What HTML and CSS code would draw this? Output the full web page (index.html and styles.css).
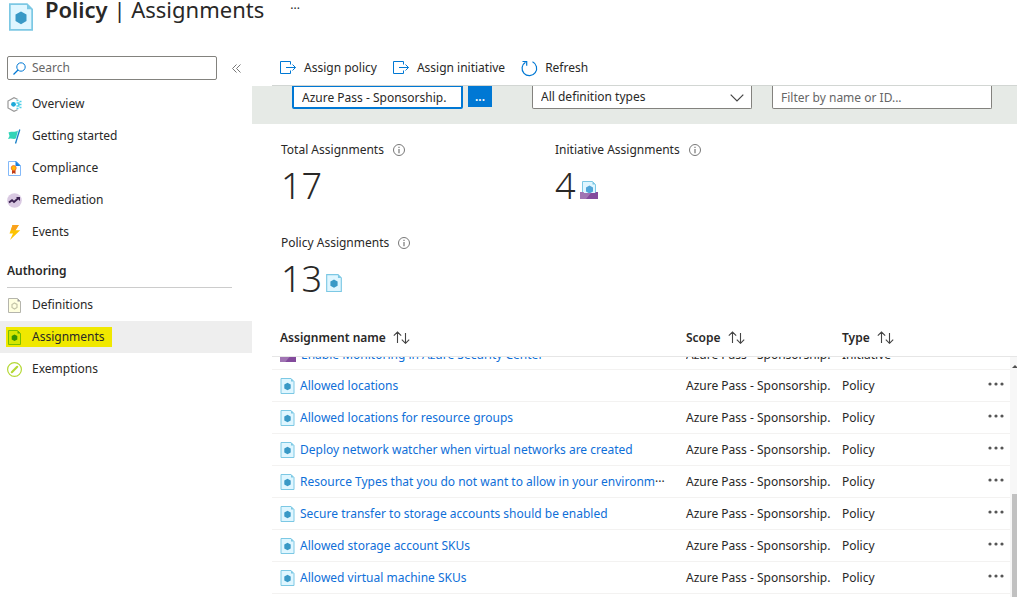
FILE: index.html
```
<!DOCTYPE html>
<html lang="en">
<head>
<meta charset="utf-8">
<title>Policy | Assignments</title>
<link rel="stylesheet" href="styles.css">
</head>
<body>
<svg class="defs" aria-hidden="true">
  <symbol id="policy" viewBox="0 0 14 16">
    <path d="M.5.5h10l3 3v12H.5z" fill="#dff6ff" stroke="#7cc8e4"/>
    <path d="M10.500.5v3h3z" fill="#7cc8e4"/>
    <path d="M7 4.800l3.200 1.800v3.800L7 12.200l-3.200-1.800V6.600z" fill="#3999c6"/>
  </symbol>
  <symbol id="initiative" viewBox="0 0 18 18">
    <path d="M2.500 13V.500h10l3 3V13z" fill="#dff6ff" stroke="#7cc8e4"/>
    <path d="M12.500.500v3h3z" fill="#7cc8e4"/>
    <path d="M9.500 4.500l3.500 2v4l-3.500 2-3.500-2v-4z" fill="#50a5d8"/>
    <path d="M0 11h3l1 1h11l1-1h2v7H0z" fill="#834a9c"/>
    <path d="M0 11h3l1 1h7l-5 6H0z" fill="#a074b3"/>
  </symbol>
  <symbol id="assign" viewBox="0 0 17 14">
    <path d="M10.500 3.500v-3h-10v12h10v-3" fill="none" stroke="#0078d4"/>
    <path d="M6 6.500h9.500M12.500 3.500l3 3-3 3" fill="none" stroke="#0078d4"/>
  </symbol>
  <symbol id="info" viewBox="0 0 12 12">
    <circle cx="6" cy="6" r="5.500" fill="none" stroke="#777"/>
    <path d="M6 2.800v1.300M6 5v4.200" stroke="#777" stroke-width="1.200"/>
  </symbol>
  <symbol id="sort" viewBox="0 0 17 13">
    <path d="M4.500 12V1.200M.800 4.700l3.700-3.700 3.700 3.700M12.500 2v10M8.800 8.600l3.700 3.700 3.700-3.700" fill="none" stroke="#444" stroke-width="1.100"/>
  </symbol>
  <symbol id="dots" viewBox="0 0 16 4">
    <circle cx="2" cy="2" r="1.600"/><circle cx="8" cy="2" r="1.600"/><circle cx="14" cy="2" r="1.600"/>
  </symbol>
</svg>

<header class="title-bar">
  <svg class="title-icon"><use href="#policy"/></svg>
  <h1><strong>Policy</strong> | Assignments</h1>
  <button class="title-more" aria-label="More">···</button>
</header>

<div class="layout">
  <aside class="sidebar">
    <div class="search-row">
      <label class="search">
        <svg viewBox="0 0 13 13"><circle cx="8" cy="5" r="4.200" fill="none" stroke="#0078d4"/><path d="M5 8L.500 12.500" stroke="#0078d4" stroke-width="1.200"/></svg>
        <input type="text" placeholder="Search" aria-label="Search">
      </label>
      <button class="collapse" aria-label="Collapse menu"><svg viewBox="0 0 9 9"><path d="M4.500.500l-4 4 4 4M8.500.500l-4 4 4 4" fill="none" stroke="#777"/></svg></button>
    </div>
    <nav>
      <a class="item" href="#"><span class="mark">
        <svg viewBox="0 0 15 15"><path d="M10.500 2.300L7 .700 1 4v7l6 3.300 3.500-1.600" fill="none" stroke="#999" stroke-width="1.200"/><circle cx="6.500" cy="7.300" r="2.400" fill="#1ba8d8"/><path d="M9.500 3.500h2M12.500 4.500h2M9.500 6h3M11 7.500h3.500M9.500 9h3M12.500 10.500h2M9.500 11.500h2" stroke="#50d0e8" stroke-width="1.500"/></svg>
        Overview</span></a>
      <a class="item" href="#"><span class="mark">
        <svg viewBox="0 0 15 15"><path d="M1.500 3.500c3-2 5 .800 9.500-2L9 9.300c-2.500 1.700-4.500-1-8 .700l1.500-3z" fill="#32d4b8"/><path d="M12.800.500L8.500 14.500" stroke="#1880c8" stroke-width="1.300"/></svg>
        Getting started</span></a>
      <a class="item" href="#"><span class="mark">
        <svg viewBox="0 0 15 15"><path d="M1.500.500h8l4 4v10h-12z" fill="#fff" stroke="#83b9f9"/><path d="M8.500 0v5h5z" fill="#1480e0"/><path d="M5 8v5l1.700-1L8.500 13V8z" fill="#c03c18"/><circle cx="6.700" cy="7" r="2.500" fill="#ffb900" stroke="#f06830" stroke-width=".800"/></svg>
        Compliance</span></a>
      <a class="item" href="#"><span class="mark">
        <svg viewBox="0 0 15 15"><circle cx="7.500" cy="7.500" r="7.300" fill="#d9c9e2"/><path d="M2 9.500l3-2.300 2 1.800 4.500-4" fill="none" stroke="#3a2150" stroke-width="1.800"/><path d="M9 4h4v4z" fill="#3a2150"/></svg>
        Remediation</span></a>
      <a class="item" href="#"><span class="mark">
        <svg viewBox="0 0 15 15"><path d="M5.500 0h6.300L8.500 5.200h4.700L3 15l3-6.500H2.500z" fill="#fdc400"/><path d="M5.500 0h6.300L8.500 5.200H4z" fill="#faa21d"/></svg>
        Events</span></a>
      <h2>Authoring</h2>
      <a class="item" href="#"><span class="mark">
        <svg viewBox="0 0 15 15"><path d="M1.500.500h9l3 3v11h-12z" fill="#ffffe0" stroke="#b5b5ad"/><path d="M10.500.500v3h3z" fill="#999"/><path d="M7.500 5l2.500 1.400v3L7.500 11 5 9.500v-3z" fill="none" stroke="#c5c5a8" stroke-width="1.200"/></svg>
        Definitions</span></a>
      <a class="item selected" href="#" aria-current="page"><span class="mark">
        <svg viewBox="0 0 15 15"><path d="M1.500.500h9l3 3v11h-12z" fill="#d4e600" stroke="#78bd00"/><path d="M10.500.500v3h3z" fill="#60a800"/><path d="M7.500 4.500L10.300 6v3.500L7.500 11 4.700 9.500V6z" fill="#349200"/></svg>
        Assignments</span></a>
      <a class="item" href="#"><span class="mark">
        <svg viewBox="0 0 15 15"><circle cx="7.500" cy="7.500" r="6.900" fill="#fff" stroke="#b4d834" stroke-width="1.200"/><path d="M4.800 10.200l5.400-5.400" stroke="#b4d834" stroke-width="2.200" stroke-linecap="round"/></svg>
        Exemptions</span></a>
    </nav>
  </aside>

  <main>
    <div class="toolbar">
      <button><svg class="assign-icon"><use href="#assign"/></svg>Assign policy</button>
      <button><svg class="assign-icon"><use href="#assign"/></svg>Assign initiative</button>
      <button><svg class="refresh-icon" viewBox="0 0 17 17"><path d="M11.500 1.800A7.300 7.300 0 1 1 4.500 2.200M1.500 1.500h4.200v4.200" fill="none" stroke="#0078d4" stroke-width="1.200"/></svg>Refresh</button>
    </div>

    <div class="filters">
      <input class="scope" type="text" value="Azure Pass - Sponsorship." aria-label="Scope">
      <button class="browse" aria-label="Browse scopes">...</button>
      <div class="select">
        <select aria-label="Definition type"><option>All definition types</option></select>
        <svg viewBox="0 0 14 8"><path d="M.700.700L7 7 13.300.700" fill="none" stroke="#444" stroke-width="1.200"/></svg>
      </div>
      <input class="find" type="text" placeholder="Filter by name or ID..." aria-label="Filter by name or ID">
    </div>

    <section class="stats">
      <div><h3>Total Assignments <svg><use href="#info"/></svg></h3><p>17</p></div>
      <div><h3>Initiative Assignments <svg><use href="#info"/></svg></h3><p>4<svg class="initiative-icon"><use href="#initiative"/></svg></p></div>
      <div><h3>Policy Assignments <svg><use href="#info"/></svg></h3><p>13<svg class="policy-icon"><use href="#policy"/></svg></p></div>
    </section>

    <div class="grid">
      <table>
        <thead>
          <tr>
            <th class="name">Assignment name <svg><use href="#sort"/></svg></th>
            <th class="scope-col">Scope <svg><use href="#sort"/></svg></th>
            <th class="type-col">Type <svg><use href="#sort"/></svg></th>
            <th class="menu-col"></th>
          </tr>
        </thead>
        <tbody>
          <tr class="cut">
            <td><div class="cell"><svg class="row-initiative"><use href="#initiative"/></svg><a href="#">Enable Monitoring in Azure Security Center</a></div></td>
            <td><div class="cell">Azure Pass - Sponsorship.</div></td>
            <td><div class="cell">Initiative</div></td>
            <td></td>
          </tr>
          <tr><td><div class="cell"><svg><use href="#policy"/></svg><a href="#">Allowed locations</a></div></td><td>Azure Pass - Sponsorship.</td><td>Policy</td><td><button aria-label="Row menu"><svg><use href="#dots"/></svg></button></td></tr>
          <tr><td><div class="cell"><svg><use href="#policy"/></svg><a href="#">Allowed locations for resource groups</a></div></td><td>Azure Pass - Sponsorship.</td><td>Policy</td><td><button aria-label="Row menu"><svg><use href="#dots"/></svg></button></td></tr>
          <tr><td><div class="cell"><svg><use href="#policy"/></svg><a href="#">Deploy network watcher when virtual networks are created</a></div></td><td>Azure Pass - Sponsorship.</td><td>Policy</td><td><button aria-label="Row menu"><svg><use href="#dots"/></svg></button></td></tr>
          <tr><td><div class="cell"><svg><use href="#policy"/></svg><a href="#">Resource Types that you do not want to allow in your environm<span>···</span></a></div></td><td>Azure Pass - Sponsorship.</td><td>Policy</td><td><button aria-label="Row menu"><svg><use href="#dots"/></svg></button></td></tr>
          <tr><td><div class="cell"><svg><use href="#policy"/></svg><a href="#">Secure transfer to storage accounts should be enabled</a></div></td><td>Azure Pass - Sponsorship.</td><td>Policy</td><td><button aria-label="Row menu"><svg><use href="#dots"/></svg></button></td></tr>
          <tr><td><div class="cell"><svg><use href="#policy"/></svg><a href="#">Allowed storage account SKUs</a></div></td><td>Azure Pass - Sponsorship.</td><td>Policy</td><td><button aria-label="Row menu"><svg><use href="#dots"/></svg></button></td></tr>
          <tr><td><div class="cell"><svg><use href="#policy"/></svg><a href="#">Allowed virtual machine SKUs</a></div></td><td>Azure Pass - Sponsorship.</td><td>Policy</td><td><button aria-label="Row menu"><svg><use href="#dots"/></svg></button></td></tr>
        </tbody>
      </table>
      <div class="track"><svg viewBox="0 0 5 3"><path d="M0 3l3-3 2 2v1z" fill="#505050"/></svg><div class="thumb"></div></div>
    </div>
  </main>
</div>
</body>
</html>
```
FILE: styles.css
```
* { box-sizing: border-box; }
body {
  margin: 0;
  min-height: 100vh;
  display: flex;
  flex-direction: column;
  overflow: hidden;
  background: #fff;
  color: #292827;
  font: 12px/20px "Noto Sans", "Open Sans", sans-serif;
}
svg { display: block; flex: none; }
.defs { position: absolute; width: 0; height: 0; }
button, input, select { font: inherit; color: inherit; margin: 0; }
button { padding: 0; border: 0; background: none; }
a { color: inherit; text-decoration: none; }
h1, h2, h3, p { margin: 0; }

.title-bar { display: flex; align-items: flex-start; gap: 12px; height: 48px; padding-left: 9px; }
.title-icon { width: 24px; height: 28px; margin-top: 3px; }
h1 { font-size: 22px; line-height: 18px; font-weight: 400; white-space: nowrap; }
h1 strong { font-weight: 600; }
.title-more { margin-left: 14px; line-height: 18px; }

.layout { display: flex; flex: 1; }
.sidebar { width: 252px; flex: none; }
.search-row { display: flex; align-items: center; padding: 8px 0 8px 7px; }
.search { display: flex; align-items: center; gap: 6px; width: 210px; height: 24px; padding: 0 5px; border: 1px solid #83827e; border-radius: 2px; }
.search svg { width: 13px; height: 13px; }
.search input { flex: 1; min-width: 0; border: 0; padding: 0; outline: 0; background: none; }
::placeholder { color: #666; opacity: 1; }
.collapse { margin-left: 15px; }
.collapse svg { width: 9px; height: 9px; }
.item { display: flex; align-items: center; height: 32px; padding-left: 6px; }
.mark { display: flex; align-items: center; gap: 10px; height: 20px; padding: 0 7px 0 1px; }
.mark svg { width: 15px; height: 15px; }
.selected { background: #eee; }
.selected .mark { background: #f0e800; }
h2 { margin: 12px 20px 1px 7px; padding-bottom: 6px; height: 28px; border-bottom: 1px solid #ccc; font-size: 12px; line-height: 22px; font-weight: 600; }

main { flex: 1; min-width: 0; display: flex; flex-direction: column; }
.toolbar { display: flex; gap: 16px; height: 38px; margin-left: 20px; padding: 2px 0 0 8px; border-bottom: 1px solid #d2d6d3; }
.toolbar button { display: flex; align-items: center; gap: 7px; height: 36px; }
.assign-icon { width: 17px; height: 14px; }
.refresh-icon { width: 17px; height: 17px; }
.filters { display: flex; height: 38px; padding: 0 25px 0 40px; background: #e6eae6; }
.filters input, .filters select { height: 23px; border: 1px solid #83827e; border-top: 0; border-radius: 0 0 2px 2px; padding: 0 8px; background: #fff; outline: 0; }
.filters .scope { width: 171px; border: 2px solid #0078d4; border-top-width: 1px; }
.browse { width: 24px; height: 21px; margin: 0 40px 0 5px; background: #0078d4; color: #fff; font-weight: 600; }
.select { position: relative; flex: 1 1 220px; margin-right: 20px; }
.select select { appearance: none; width: 100%; }
.select svg { position: absolute; right: 8px; top: 8px; width: 14px; height: 8px; pointer-events: none; }
.filters .find { flex: 1 1 220px; min-width: 0; }

.stats { display: grid; grid-template-columns: 274px 1fr; row-gap: 29px; padding: 16px 0 0 29px; }
h3 { display: flex; align-items: center; gap: 9px; font-size: 12px; line-height: 20px; font-weight: 400; }
h3 svg { width: 12px; height: 12px; }
.stats p { display: flex; align-items: flex-end; gap: 4px; height: 44px; font-size: 36px; line-height: 36px; font-weight: 300; }
.stats p svg { margin-bottom: 5px; }
.initiative-icon { width: 18px; height: 18px; }
.policy-icon { width: 16px; height: 18px; }

.grid { position: relative; flex: 1; margin: 23px 0 0 20px; }
table { width: 100%; table-layout: fixed; border-collapse: collapse; }
th { height: 36px; padding: 0 0 0 8px; border-bottom: 1px solid #e6e6e6; text-align: left; font-weight: 600; }
th svg { display: inline-block; width: 17px; height: 13px; margin-left: 4px; vertical-align: -2px; }
.scope-col { width: 156px; }
.type-col { width: 128px; }
.menu-col { width: 55px; }
td { height: 32px; padding: 2px 0 0 8px; border-bottom: 1px solid #f3f2f1; white-space: nowrap; }
.cell { display: flex; align-items: center; gap: 5px; overflow: hidden; }
.cell svg { width: 15px; height: 16px; }
.cell a { color: #0f6fd8; }
.cell span { color: #292827; }
.cut td { height: 13px; padding-top: 0; }
.cut .cell { height: 12px; align-items: flex-end; padding-bottom: 4px; }
.cell .row-initiative { width: 16px; height: 16px; margin-bottom: 3px; }
td button { display: block; margin: 0 0 4px 18px; fill: #555; }
td button svg { width: 16px; height: 4px; }
.track { position: absolute; top: 37px; right: 0; bottom: 0; width: 7px; padding-left: 2px; display: flex; flex-direction: column; justify-content: space-between; background: #f7f7f7; }
.track svg { width: 5px; height: 3px; margin-top: 8px; }
.thumb { height: 43%; background: #c1c1c1; }
```
